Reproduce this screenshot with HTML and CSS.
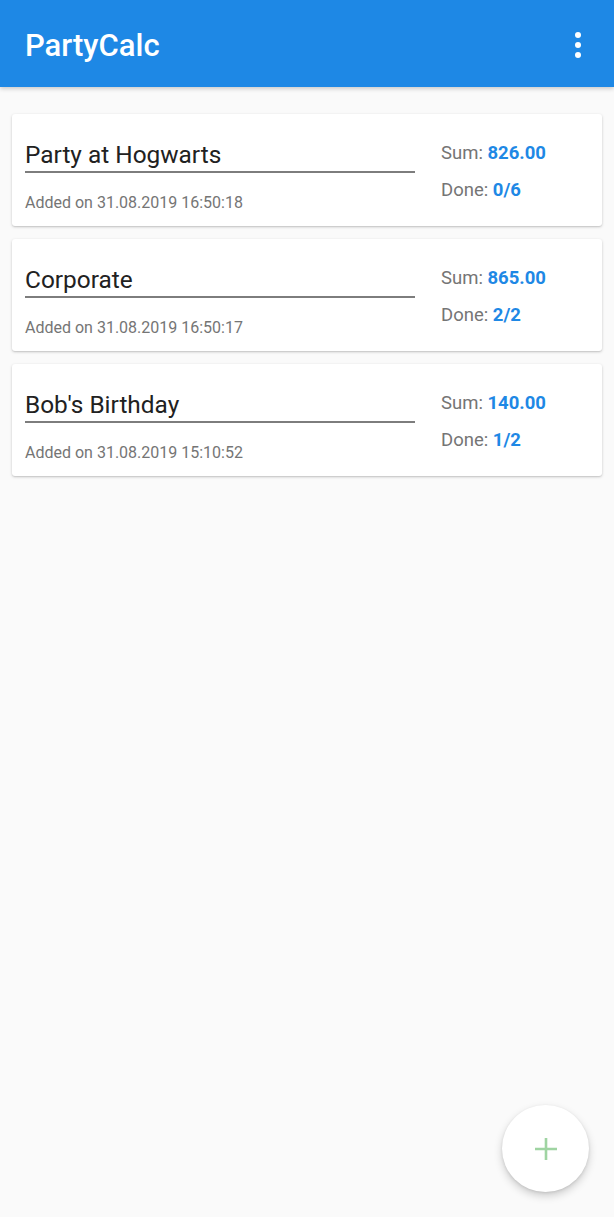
FILE: index.html
```html
<!DOCTYPE html>
<html>
<head>
<meta charset="utf-8">
<link rel="stylesheet" href="styles.css">
</head>
<body>
<header class="appbar">
  <h1 class="appbar-title">PartyCalc</h1>
  <button class="menu-btn" aria-label="More options">
    <svg width="8" height="28" viewBox="0 0 8 28"><circle cx="4" cy="4" r="3" fill="#fff"/><circle cx="4" cy="14" r="3" fill="#fff"/><circle cx="4" cy="24" r="3" fill="#fff"/></svg>
  </button>
</header>
<main class="list">
  <article class="card">
    <div class="card-main">
      <div class="card-title">Party at Hogwarts</div>
      <div class="card-date">Added on 31.08.2019 16:50:18</div>
    </div>
    <div class="card-stats">
      <div class="stat">Sum: <b>826.00</b></div>
      <div class="stat">Done: <b>0/6</b></div>
    </div>
  </article>
  <article class="card">
    <div class="card-main">
      <div class="card-title">Corporate</div>
      <div class="card-date">Added on 31.08.2019 16:50:17</div>
    </div>
    <div class="card-stats">
      <div class="stat">Sum: <b>865.00</b></div>
      <div class="stat">Done: <b>2/2</b></div>
    </div>
  </article>
  <article class="card">
    <div class="card-main">
      <div class="card-title">Bob's Birthday</div>
      <div class="card-date">Added on 31.08.2019 15:10:52</div>
    </div>
    <div class="card-stats">
      <div class="stat">Sum: <b>140.00</b></div>
      <div class="stat">Done: <b>1/2</b></div>
    </div>
  </article>
</main>
<button class="fab" aria-label="Add">
  <svg width="24" height="24" viewBox="0 0 24 24"><path d="M12 1v22M1 12h22" stroke="#9fd4a2" stroke-width="2.6" fill="none"/></svg>
</button>
</body>
</html>
```

FILE: styles.css
```css
* { box-sizing: border-box; }
html, body { margin: 0; padding: 0; }
body {
  background: #fafafa;
  font-family: Roboto, "Liberation Sans", sans-serif;
  width: 614px;
  height: 1217px;
  overflow: hidden;
  position: relative;
}
.appbar {
  height: 87px;
  background: #1e88e5;
  display: flex;
  align-items: center;
  justify-content: space-between;
  padding: 0 25px;
  box-shadow: 0 2px 4px rgba(0,0,0,0.18);
  position: relative;
  z-index: 1;
}
.appbar-title {
  margin: 0;
  color: #fff;
  font-size: 31px;
  font-weight: 500;
  letter-spacing: 0;
  padding-top: 3px;
}
.menu-btn {
  background: none;
  border: 0;
  padding: 0;
  margin-right: -1px;
  width: 24px;
  display: flex;
  justify-content: center;
  padding-top: 2px;
}
.list {
  display: flex;
  flex-direction: column;
  gap: 13px;
  padding: 27px 12px 0;
}
.card {
  background: #fff;
  border-radius: 3px;
  box-shadow: 0 1px 3px rgba(0,0,0,0.2), 0 1px 1px rgba(0,0,0,0.06);
  height: 112px;
  display: flex;
  padding-left: 13px;
  gap: 26px;
}
.card-main {
  width: 390px;
  padding-top: 26px;
}
.card-title {
  font-size: 24.4px;
  line-height: 29px;
  color: #212121;
  padding-bottom: 2px;
  border-bottom: 2px solid #7d7d7d;
}
.card-date {
  font-size: 16px;
  line-height: 20px;
  color: #757575;
  margin-top: 20px;
}
.card-stats {
  flex: 1;
  padding-top: 28px;
  display: flex;
  flex-direction: column;
  gap: 15px;
}
.stat {
  font-size: 18.5px;
  line-height: 22px;
  color: #757575;
}
.stat b {
  color: #1e88e5;
  font-weight: 700;
}
.fab {
  position: absolute;
  left: 502px;
  top: 1105px;
  width: 87px;
  height: 87px;
  border-radius: 50%;
  border: 0;
  background: #fff;
  box-shadow: 0 4px 8px rgba(0,0,0,0.18), 0 1px 3px rgba(0,0,0,0.1);
  display: flex;
  align-items: center;
  justify-content: center;
  padding: 0;
}
```
